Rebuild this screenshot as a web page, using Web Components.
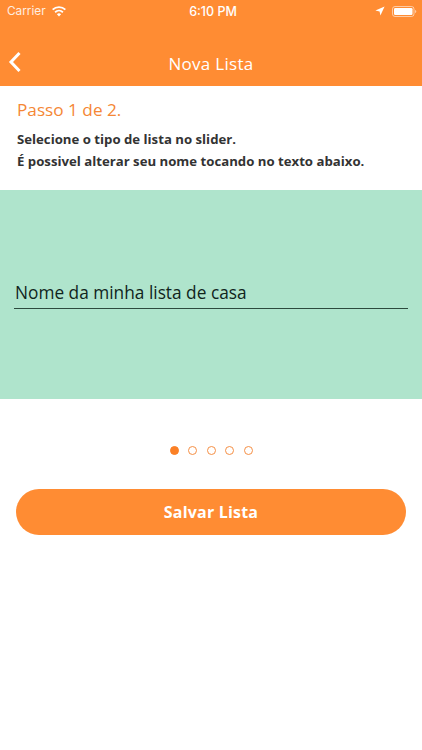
<!DOCTYPE html>
<html>
<head>
<meta charset="utf-8">
<style>
  html, body { margin: 0; padding: 0; background: #fff; }
  body { font-family: "Open Sans", sans-serif; width: 422px; height: 750px; overflow: hidden; }
</style>
</head>
<body>
<app-header title-text="Nova Lista"></app-header>
<step-intro step="Passo 1 de 2.">
  <span>Selecione o tipo de lista no slider.</span>
  <span>É possivel alterar seu nome tocando no texto abaixo.</span>
</step-intro>
<list-slide name="Nome da minha lista de casa"></list-slide>
<page-dots count="5" active="0"></page-dots>
<save-button>Salvar Lista</save-button>

<script>
class AppHeader extends HTMLElement {
  connectedCallback() {
    this.attachShadow({ mode: "open" }).innerHTML = `
      <style>
        :host { display: block; height: 86px; background: #ff8c33; color: #fff; }
        .status { height: 22px; display: flex; align-items: center; justify-content: space-between; padding: 0 5px 0 7px; font: 12.5px Inter, "Liberation Sans", sans-serif; color: #fff; }
        .left, .right { display: flex; align-items: center; flex: 1; }
        .right { justify-content: flex-end; gap: 7px; }
        .carrier { opacity: .85; font-size: 11.8px; margin-right: 6px; }
        .time { font-weight: 500; font-size: 12.5px; padding-left: 2px; }
        .nav { height: 64px; display: flex; align-items: center; justify-content: center; position: relative; font-size: 17px; font-weight: 500; letter-spacing: .3px; box-sizing: border-box; padding-top: 18px; }
        .back { position: absolute; left: 8px; top: 29px; }
        svg { display: block; }
      </style>
      <div class="status">
        <div class="left"><span class="carrier">Carrier</span>
          <svg width="14" height="11" viewBox="0 0 14 11"><path d="M7 10.6 4.9 8.2a3 3 0 0 1 4.2 0zM3.7 6.9 2.5 5.6a6.6 6.6 0 0 1 9 0l-1.2 1.3a4.8 4.8 0 0 0-6.6 0zM1.3 4.3 0 3a10.2 10.2 0 0 1 14 0l-1.3 1.3a8.4 8.4 0 0 0-11.4 0z" fill="#fff"/></svg>
        </div>
        <span class="time">6:10 PM</span>
        <div class="right">
          <svg width="10" height="10" viewBox="0 0 10 10"><path d="M9.6.4 5.4 9.6 4.6 5.4.4 4.6z" fill="#fff"/></svg>
          <svg width="25" height="11" viewBox="0 0 25 11"><rect x=".5" y=".5" width="21.5" height="10" rx="2.5" fill="none" stroke="#fff" stroke-opacity=".55"/><rect x="2" y="2" width="18.5" height="7" rx="1.2" fill="#fff"/><path d="M23 4v3c.8-.2 1.3-.8 1.3-1.500S23.800 4.200 23 4z" fill="#fff" fill-opacity=".55"/></svg>
        </div>
      </div>
      <div class="nav">
        <svg class="back" width="14" height="22" viewBox="0 0 14 22"><path d="M11.500 2 3 11l8.500 9" fill="none" stroke="#fff" stroke-width="3"/></svg>
        <span>${this.getAttribute("title-text")}</span>
      </div>`;
  }
}

class StepIntro extends HTMLElement {
  connectedCallback() {
    this.attachShadow({ mode: "open" }).innerHTML = `
      <style>
        :host { display: block; height: 104px; box-sizing: border-box; padding: 11px 16px 0 17px; }
        .step { color: #f58735; font-size: 17.200px; line-height: 26px; }
        .text { margin-top: 5px; display: flex; flex-direction: column; color: #333; font-size: 13.200px; font-weight: 700; line-height: 22px; }
        ::slotted(span) { display: block; }
      </style>
      <div class="step">${this.getAttribute("step")}</div>
      <div class="text"><slot></slot></div>`;
  }
}

class ListSlide extends HTMLElement {
  connectedCallback() {
    this.attachShadow({ mode: "open" }).innerHTML = `
      <style>
        :host { display: flex; flex-direction: column; justify-content: flex-start; height: 209px; box-sizing: border-box; padding: 90px 14px 0 14px; background: #afe4cc; }
        .name { color: #10241c; font-size: 17.300px; line-height: 26px; padding: 0 0 2px 1px; border-bottom: 1px solid #2c4a3d; }
      </style>
      <div class="name">${this.getAttribute("name")}</div>`;
  }
}

class PageDots extends HTMLElement {
  connectedCallback() {
    const n = +this.getAttribute("count");
    const active = +this.getAttribute("active");
    let dots = "";
    for (let i = 0; i < n; i++) dots += `<i class="${i === active ? "on" : ""}"></i>`;
    this.attachShadow({ mode: "open" }).innerHTML = `
      <style>
        :host { display: flex; justify-content: center; gap: 9.500px; padding-top: 47px; height: 90px; box-sizing: border-box; }
        i { width: 9px; height: 9px; box-sizing: border-box; border-radius: 50%; border: 1.500px solid #f58f45; }
        i.on { background: #fb8026; border-color: #fb8026; }
      </style>
      ${dots}`;
  }
}

class SaveButton extends HTMLElement {
  connectedCallback() {
    this.attachShadow({ mode: "open" }).innerHTML = `
      <style>
        :host { display: flex; align-items: center; justify-content: center; height: 46px; margin: 0 16px; border-radius: 23px; background: #ff8c33; color: #fff; font-size: 16px; font-weight: 700; letter-spacing: .2px; }
      </style>
      <slot></slot>`;
  }
}

customElements.define("app-header", AppHeader);
customElements.define("step-intro", StepIntro);
customElements.define("list-slide", ListSlide);
customElements.define("page-dots", PageDots);
customElements.define("save-button", SaveButton);
</script>
</body>
</html>
